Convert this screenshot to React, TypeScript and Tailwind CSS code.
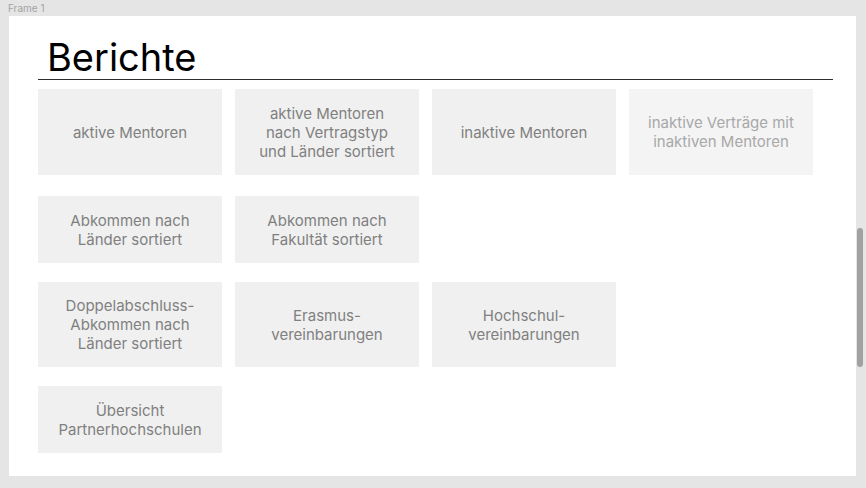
const rows: { h: string; extra?: string; items: { label: string[]; faded?: boolean }[] }[] = [
  {
    h: 'h-[86px]',
    extra: 'mb-[2px]',
    items: [
      { label: ['aktive Mentoren'] },
      { label: ['aktive Mentoren', 'nach Vertragstyp', 'und Länder sortiert'] },
      { label: ['inaktive Mentoren'] },
      { label: ['inaktive Verträge mit', 'inaktiven Mentoren'], faded: true },
    ],
  },
  {
    h: 'h-[67px]',
    items: [
      { label: ['Abkommen nach', 'Länder sortiert'] },
      { label: ['Abkommen nach', 'Fakultät sortiert'] },
    ],
  },
  {
    h: 'h-[85px]',
    items: [
      { label: ['Doppelabschluss-', 'Abkommen nach', 'Länder sortiert'] },
      { label: ['Erasmus-', 'vereinbarungen'] },
      { label: ['Hochschul-', 'vereinbarungen'] },
    ],
  },
  {
    h: 'h-[67px]',
    items: [{ label: ['Übersicht', 'Partnerhochschulen'] }],
  },
]

function Card({ label, faded, h }: { label: string[]; faded?: boolean; h: string }) {
  return (
    <div
      className={`${h} w-[184px] flex items-center justify-center text-center text-[15px] leading-[19px] ${
        faded ? 'bg-[#f4f4f4] text-[#a8a8a8]' : 'bg-[#f0f0f0] text-[#808080]'
      }`}
    >
      <div>
        {label.map((l) => (
          <div key={l}>{l}</div>
        ))}
      </div>
    </div>
  )
}

export default function App() {
  return (
    <div
      className="relative w-[866px] h-[488px] bg-[#e5e5e5] overflow-hidden pl-[9px] pr-[10px]"
      style={{ fontFamily: 'Inter, "Noto Sans", sans-serif' }}
    >
      <div className="h-[16px] pt-[2px] -ml-[1px] text-[10px] leading-[12px] text-[#a3a3a3]">Frame 1</div>

      <div className="w-[847px] h-[460px] bg-white pl-[29px] pr-[23px] pt-[22px]">
        <div className="border-b border-[#2e2e2e] pb-[3px]">
          <h1 className="pl-[9px] text-[38px] leading-[38px] text-black">Berichte</h1>
        </div>

        <div className="mt-[9px] flex flex-col gap-[19px]">
          {rows.map((row, i) => (
            <div key={i} className={`flex gap-[13px] ${row.extra ?? ''}`}>
              {row.items.map((it) => (
                <Card key={it.label.join()} label={it.label} faded={it.faded} h={row.h} />
              ))}
            </div>
          ))}
        </div>
      </div>

      {/* scrollbar */}
      <div className="absolute left-[857px] top-[228px] w-[6px] h-[139px] rounded-full bg-[#a1a1a1]" />
    </div>
  )
}
